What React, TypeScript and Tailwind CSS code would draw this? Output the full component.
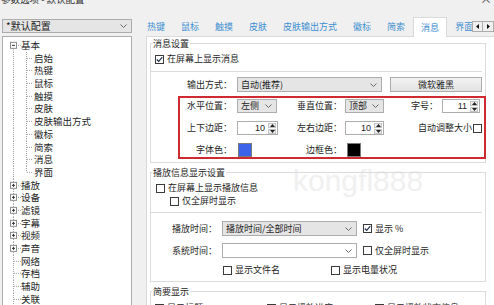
import React from "react";

const font = "font-['Noto_Sans_CJK_SC',sans-serif]";
const H = 12.7;

function Chevron() {
  return (
    <svg width="7" height="4" viewBox="0 0 7 4" className="shrink-0">
      <path d="M0.5 0.5 L3.5 3.5 L6.5 0.5" fill="none" stroke="#6b6b6b" strokeWidth="1" />
    </svg>
  );
}

function Check({ on }: { on?: boolean }) {
  return (
    <span className="flex h-[9px] w-[9px] shrink-0 items-center justify-center border border-[#3a3a3a] bg-white">
      {on && (
        <svg width="7" height="7" viewBox="0 0 7 7">
          <path d="M0.8 3.5 L2.7 5.4 L6.3 1.2" fill="none" stroke="#1f2d4a" strokeWidth="1.1" />
        </svg>
      )}
    </span>
  );
}

function Combo({ text, className, white }: { text?: string; className: string; white?: boolean }) {
  return (
    <div
      className={`flex items-center justify-between border border-[#adadad] pl-[3px] pr-[4px] ${
        white ? "bg-white" : "bg-[#e5e5e5]"
      } ${className}`}
    >
      <span>{text}</span>
      <Chevron />
    </div>
  );
}

function Spin({ value, className }: { value: string; className: string }) {
  return (
    <div className={`flex border border-[#adadad] bg-white ${className}`}>
      <span className="flex flex-1 items-center justify-end pr-[3px] font-['Liberation_Sans',sans-serif]">
        {value}
      </span>
      <span className="flex w-[9px] flex-col gap-px py-px pr-px">
        <span className="flex flex-1 items-center justify-center border border-[#c4c4c4] bg-[#efefef]">
          <svg width="5" height="3" viewBox="0 0 5 3">
            <path d="M0 3 L2.5 0 L5 3Z" fill="#222" />
          </svg>
        </span>
        <span className="flex flex-1 items-center justify-center border border-[#c4c4c4] bg-[#efefef]">
          <svg width="5" height="3" viewBox="0 0 5 3">
            <path d="M0 0 L2.5 3 L5 0Z" fill="#222" />
          </svg>
        </span>
      </span>
    </div>
  );
}

type Kind = "open" | "closed" | "leaf" | "child" | "last";

const tree: [string, Kind][] = [
  ["基本", "open"],
  ["启始", "child"],
  ["热键", "child"],
  ["鼠标", "child"],
  ["触摸", "child"],
  ["皮肤", "child"],
  ["皮肤输出方式", "child"],
  ["徽标", "child"],
  ["简索", "child"],
  ["消息", "child"],
  ["界面", "last"],
  ["播放", "closed"],
  ["设备", "closed"],
  ["滤镜", "closed"],
  ["字幕", "closed"],
  ["视频", "closed"],
  ["声音", "closed"],
  ["网络", "leaf"],
  ["存档", "leaf"],
  ["辅助", "leaf"],
  ["关联", "leaf"],
];

const dot = { stroke: "#a3a3a3", strokeDasharray: "1 1" };

function TreeRow({ label, kind, first }: { label: string; kind: Kind; first: boolean }) {
  const mid = H / 2;
  if (kind === "child" || kind === "last") {
    return (
      <div className="flex h-[12.7px] items-center">
        <svg width="31" height={H} className="shrink-0">
          <line x1="10.5" y1="0" x2="10.5" y2={H} {...dot} />
          <line x1="23.5" y1="0" x2="23.5" y2={kind === "last" ? mid : H} {...dot} />
          <line x1="24" y1={mid} x2="30" y2={mid} {...dot} />
        </svg>
        <span>{label}</span>
      </div>
    );
  }
  return (
    <div className="flex h-[12.7px] items-center">
      <svg width="18" height={H} className="shrink-0">
        <line x1="10.5" y1={first ? mid : 0} x2="10.5" y2={H} {...dot} />
        <line x1="11" y1={mid} x2="18" y2={mid} {...dot} />
        {kind !== "leaf" && (
          <g>
            <rect x="7.5" y={mid - 3} width="6" height="6" fill="#fff" stroke="#8e8e8e" />
            <line x1="9" y1={mid} x2="12" y2={mid} stroke="#333" />
            {kind === "closed" && <line x1="10.5" y1={mid - 1.5} x2="10.5" y2={mid + 1.5} stroke="#333" />}
          </g>
        )}
      </svg>
      <span>{label}</span>
    </div>
  );
}

function LeftPane() {
  return (
    <div className="ml-[2px] flex w-[130px] shrink-0 flex-col">
      <div className="mt-[2px] flex h-[16px] items-center justify-between border border-[#acacac] bg-[#e5e5e5] pl-[3px] pr-[4px] text-[10px]">
        <span>*默认配置</span>
        <Chevron />
      </div>
      <div className="mt-[3px] flex-1 border border-[#acacac] bg-white pt-[2px] text-[9.5px] leading-[12.7px]">
        {tree.map(([t, k], i) => (
          <TreeRow key={t + i} label={t} kind={k} first={i === 0} />
        ))}
      </div>
    </div>
  );
}

const tabs = ["热键", "鼠标", "触摸", "皮肤", "皮肤输出方式", "徽标", "简索", "消息", "界面"];

function Tabs() {
  return (
    <div className="relative h-[19px] shrink-0">
      <div className="-ml-[7px] flex h-full items-end text-[#3d8fd1]">
        {tabs.map((t) =>
          t === "消息" ? (
            <div
              key={t}
              className="relative z-10 -mb-px flex h-[20px] shrink-0 items-center border border-b-0 border-[#d9d9d9] bg-white px-[7px]"
            >
              {t}
            </div>
          ) : (
            <div key={t} className="flex h-[19px] shrink-0 items-center px-[8px]">
              {t}
            </div>
          )
        )}
      </div>
      <div className="absolute right-0 top-[4px] z-20 flex">
        <span className="flex h-[11px] w-[11px] items-center justify-center border border-[#acacac] bg-[#f0f0f0]">
          <svg width="3" height="5" viewBox="0 0 3 5">
            <path d="M3 0 L0 2.5 L3 5Z" fill="#111" />
          </svg>
        </span>
        <span className="flex h-[11px] w-[11px] items-center justify-center border border-l-0 border-[#acacac] bg-[#f0f0f0]">
          <svg width="3" height="5" viewBox="0 0 3 5">
            <path d="M0 0 L3 2.5 L0 5Z" fill="#111" />
          </svg>
        </span>
      </div>
    </div>
  );
}

function MessageGroup() {
  return (
    <fieldset className="ml-[3px] mt-[1px] w-[336px] border border-[#dcdcdc] pb-[3px]">
      <legend className="ml-[1px] px-[1px] leading-[11px]">消息设置</legend>
      <div className="mt-[4px] flex h-[12px] items-center gap-[3px] pl-[4px]">
        <Check on />
        <span>在屏幕上显示消息</span>
      </div>
      <div className="mr-[3px] mt-[6px] border-t border-[#dcdcdc]" />
      <div className="mt-[5px] flex h-[15px] items-center">
        <span className="w-[86px] pr-[5px] text-right">输出方式：</span>
        <Combo text="自动(推荐)" className="h-[15px] w-[145px]" />
        <div className="ml-[8px] flex h-[15px] w-[92px] items-center justify-center border border-[#adadad] bg-linear-to-b from-[#f3f3f3] to-[#e2e2e2]">
          微软雅黑
        </div>
      </div>
      <div className="-mr-px ml-[27px] mt-[4px] border-2 border-[#cf2a2f] pt-px">
        <div className="grid auto-rows-[14px] grid-cols-[57px_41px_67px_39px_58px_1fr] items-center gap-y-[8px]">
          <span className="pr-[5px] text-right">水平位置：</span>
          <Combo text="左侧" className="h-[14px] w-[40px]" />
          <span className="pr-[3px] text-right">垂直位置：</span>
          <Combo text="顶部" className="h-[14px] w-[39px]" />
          <span className="pr-[4px] text-right">字号：</span>
          <Spin value="11" className="h-[14px] w-[38px]" />

          <span className="pr-[5px] text-right">上下边距：</span>
          <Spin value="10" className="h-[14px] w-[41px]" />
          <span className="pr-[3px] text-right">左右边距：</span>
          <Spin value="10" className="h-[14px] w-[39px]" />
          <div className="col-span-2 flex items-center justify-end gap-px pr-[2px]">
            <span>自动调整大小</span>
            <Check />
          </div>

          <span className="pr-[5px] text-right">字体色：</span>
          <span className="ml-px h-[14px] w-[14px] border border-[#7a7a7a] bg-[#3c63e9]" />
          <span className="pr-[3px] text-right">边框色：</span>
          <span className="ml-[2px] h-[14px] w-[14px] border border-[#7a7a7a] bg-black" />
          <span />
          <span />
        </div>
      </div>
    </fieldset>
  );
}

function PlayGroup() {
  return (
    <fieldset className="ml-[3px] mt-[4px] w-[336px] border border-[#dcdcdc] pb-[5px]">
      <legend className="ml-[1px] px-[1px] leading-[11px]">播放信息显示设置</legend>
      <div className="mt-[4px] flex h-[12px] items-center gap-[3px] pl-[5px]">
        <Check />
        <span>在屏幕上显示播放信息</span>
      </div>
      <div className="mt-px flex h-[12px] items-center gap-[3px] pl-[19px]">
        <Check />
        <span>仅全屏时显示</span>
      </div>
      <div className="mr-[3px] mt-[5px] border-t border-[#dcdcdc]" />
      <div className="mt-[8px] flex h-[15px] items-center">
        <span className="w-[71px] pr-[5px] text-right">播放时间：</span>
        <Combo text="播放时间/全部时间" className="h-[15px] w-[135px]" />
        <div className="ml-[6px] flex items-center gap-[3px]">
          <Check on />
          <span>显示 %</span>
        </div>
      </div>
      <div className="mt-[7px] flex h-[15px] items-center">
        <span className="w-[71px] pr-[5px] text-right">系统时间：</span>
        <Combo className="h-[15px] w-[135px]" white />
        <div className="ml-[6px] flex items-center gap-[3px]">
          <Check />
          <span>仅全屏时显示</span>
        </div>
      </div>
      <div className="mt-[6px] flex h-[12px] items-center pl-[72px]">
        <div className="flex w-[108px] items-center gap-[3px]">
          <Check />
          <span>显示文件名</span>
        </div>
        <div className="flex items-center gap-[3px]">
          <Check />
          <span>显示电量状况</span>
        </div>
      </div>
    </fieldset>
  );
}

function BriefGroup() {
  return (
    <fieldset className="ml-[3px] mt-[4px] w-[336px] border border-[#dcdcdc] pb-[5px]">
      <legend className="ml-[1px] px-[1px] leading-[11px]">简要显示</legend>
      <div className="mt-[5px] flex h-[12px] items-center pl-[4px]">
        <div className="flex w-[112px] items-center gap-[3px]">
          <Check />
          <span>显示标题</span>
        </div>
        <div className="flex w-[108px] items-center gap-[3px]">
          <Check />
          <span>显示播放进度</span>
        </div>
        <div className="flex items-center gap-[3px]">
          <Check />
          <span>显示播放状态信息</span>
        </div>
      </div>
    </fieldset>
  );
}

function RightPane() {
  return (
    <div className="ml-[14px] flex w-[348px] shrink-0 flex-col">
      <Tabs />
      <div className="relative flex-1 border border-r-0 border-[#d9d9d9] bg-white">
        <span className="pointer-events-none absolute left-[146px] top-[129px] font-['Liberation_Sans',sans-serif] text-[30px] leading-[30px] text-[#f0f0f0]">
          kongfl888
        </span>
        <div className="relative">
          <MessageGroup />
          <PlayGroup />
          <BriefGroup />
        </div>
      </div>
    </div>
  );
}

export default function App() {
  return (
    <div
      className={`relative flex h-[305px] w-[494px] flex-col overflow-hidden bg-[#f0f0f0] text-[9px] leading-[12px] text-[#1e1e1e] ${font}`}
    >
      <div className="flex h-[17px] shrink-0 items-start justify-between">
        <span className="-mt-[6px] ml-px text-[9.5px] leading-[11px] text-[#333]">参数选项 - 默认配置</span>
        <span className="-mt-[7px] mr-[2px] text-[12px] leading-[12px] text-[#444]">×</span>
      </div>
      <div className="flex min-h-0 flex-1">
        <LeftPane />
        <RightPane />
      </div>
    </div>
  );
}
